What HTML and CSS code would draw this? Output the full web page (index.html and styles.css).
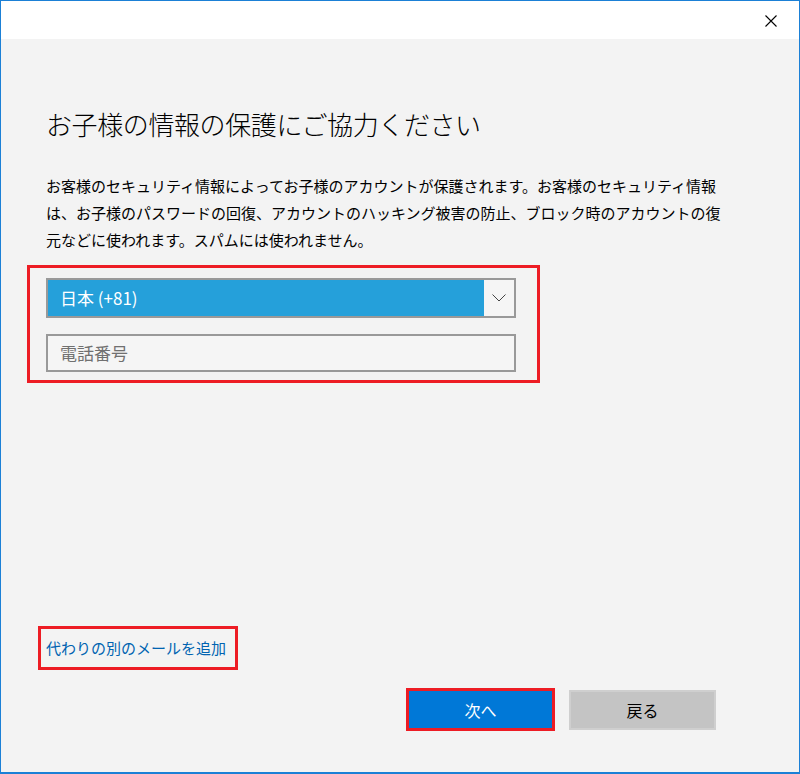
FILE: index.html
```html
<!DOCTYPE html>
<html lang="ja">
<head>
    <meta charset="UTF-8">
    <meta name="viewport" content="width=device-width, initial-scale=1.0">
    <title>お子様の情報の保護にご協力ください</title>
    <link rel="stylesheet" href="styles.css">
</head>
<body>
    <div class="window">
        <div class="titlebar">
            <button class="close" aria-label="閉じる">
                <svg width="12" height="12" viewBox="0 0 12 12">
                    <path d="M0.5 0.5 L11.5 11.5 M11.5 0.5 L0.5 11.5" stroke="#000" stroke-width="1.1" fill="none"/>
                </svg>
            </button>
        </div>

        <div class="content">
            <h1 class="heading">お子様の情報の保護にご協力ください</h1>
            <p class="intro">お客様のセキュリティ情報によってお子様のアカウントが保護されます。お客様のセキュリティ情報は、お子様のパスワードの回復、アカウントのハッキング被害の防止、ブロック時のアカウントの復元などに使われます。スパムには使われません。</p>

            <div class="mark phone-box">
                <div class="country">
                    <span class="country-value">日本 (+81)</span>
                    <span class="country-arrow">
                        <svg width="14" height="8" viewBox="0 0 14 8">
                            <path d="M0.5 0.5 L7 7 L13.5 0.5" stroke="#444" stroke-width="1" fill="none"/>
                        </svg>
                    </span>
                </div>
                <div class="phone">電話番号</div>
            </div>

            <div class="footer">
                <div class="mark link-box">
                    <a class="alt-link">代わりの別のメールを追加</a>
                </div>
                <div class="actions">
                    <div class="mark next-box">
                        <button class="btn btn-primary">次へ</button>
                    </div>
                    <button class="btn btn-back">戻る</button>
                </div>
            </div>
        </div>
    </div>
</body>
</html>
```

FILE: styles.css
```css
html, body {
    margin: 0;
    padding: 0;
}
body {
    font-family: "Noto Sans CJK JP", "Noto Sans", sans-serif;
    color: #000;
    background: #f3f3f3;
}
.window {
    width: 800px;
    height: 774px;
    box-sizing: border-box;
    border: 1px solid #1b80d6;
    border-bottom-width: 2px;
    display: flex;
    flex-direction: column;
    background: #f3f3f3;
}
.titlebar {
    height: 38px;
    background: #fff;
    display: flex;
    justify-content: flex-end;
    align-items: flex-start;
}
.close {
    width: 46px;
    height: 38px;
    margin-right: 5px;
    border: 0;
    background: transparent;
    padding: 0;
    padding-top: 1px;
    display: flex;
    align-items: center;
    justify-content: center;
}
.content {
    flex: 1;
    display: flex;
    flex-direction: column;
    padding: 67px 83px 0 45px;
}
.heading {
    margin: 0;
    font-size: 26px;
    font-weight: 200;
    line-height: 36px;
    letter-spacing: -0.4px;
}
.intro {
    margin: 30px 0 0;
    width: 680px;
    font-size: 15px;
    line-height: 27px;
}
.mark {
    border: 3px solid #ed1c24;
    box-sizing: border-box;
}
.phone-box {
    margin: 12px 0 0 -19px;
    width: 513px;
    height: 118px;
    padding: 10px 0 0 16px;
}
.country {
    width: 470px;
    height: 40px;
    box-sizing: border-box;
    border: 2px solid #999;
    display: flex;
}
.country-value {
    flex: 1;
    background: #25a0da;
    color: #fff;
    font-size: 17px;
    line-height: 36px;
    padding-left: 12px;
}
.country-arrow {
    width: 30px;
    background: #f5f5f5;
    display: flex;
    align-items: center;
    justify-content: center;
}
.phone {
    margin-top: 16px;
    width: 470px;
    height: 38px;
    box-sizing: border-box;
    border: 2px solid #999;
    background: #f5f5f5;
    color: #707070;
    font-size: 17px;
    line-height: 34px;
    padding-left: 12px;
}
.footer {
    margin-top: auto;
    padding-bottom: 41px;
}
.link-box {
    display: inline-block;
    margin-left: -8px;
    height: 44px;
    padding: 0 9px 0 5px;
}
.alt-link {
    color: #0063b1;
    font-size: 15px;
    line-height: 38px;
    cursor: pointer;
}
.actions {
    margin-top: 18px;
    display: flex;
    justify-content: flex-end;
    align-items: center;
    gap: 14px;
}
.next-box {
    width: 149px;
    height: 43px;
}
.btn {
    font-family: inherit;
    font-size: 16px;
    border: 0;
    padding: 0;
}
.btn-primary {
    width: 143px;
    height: 37px;
    background: #0078d7;
    color: #fff;
}
.btn-back {
    width: 147px;
    height: 40px;
    box-sizing: border-box;
    background: #c4c4c4;
    border: 2px solid #cfcfcf;
    color: #000;
}
```
